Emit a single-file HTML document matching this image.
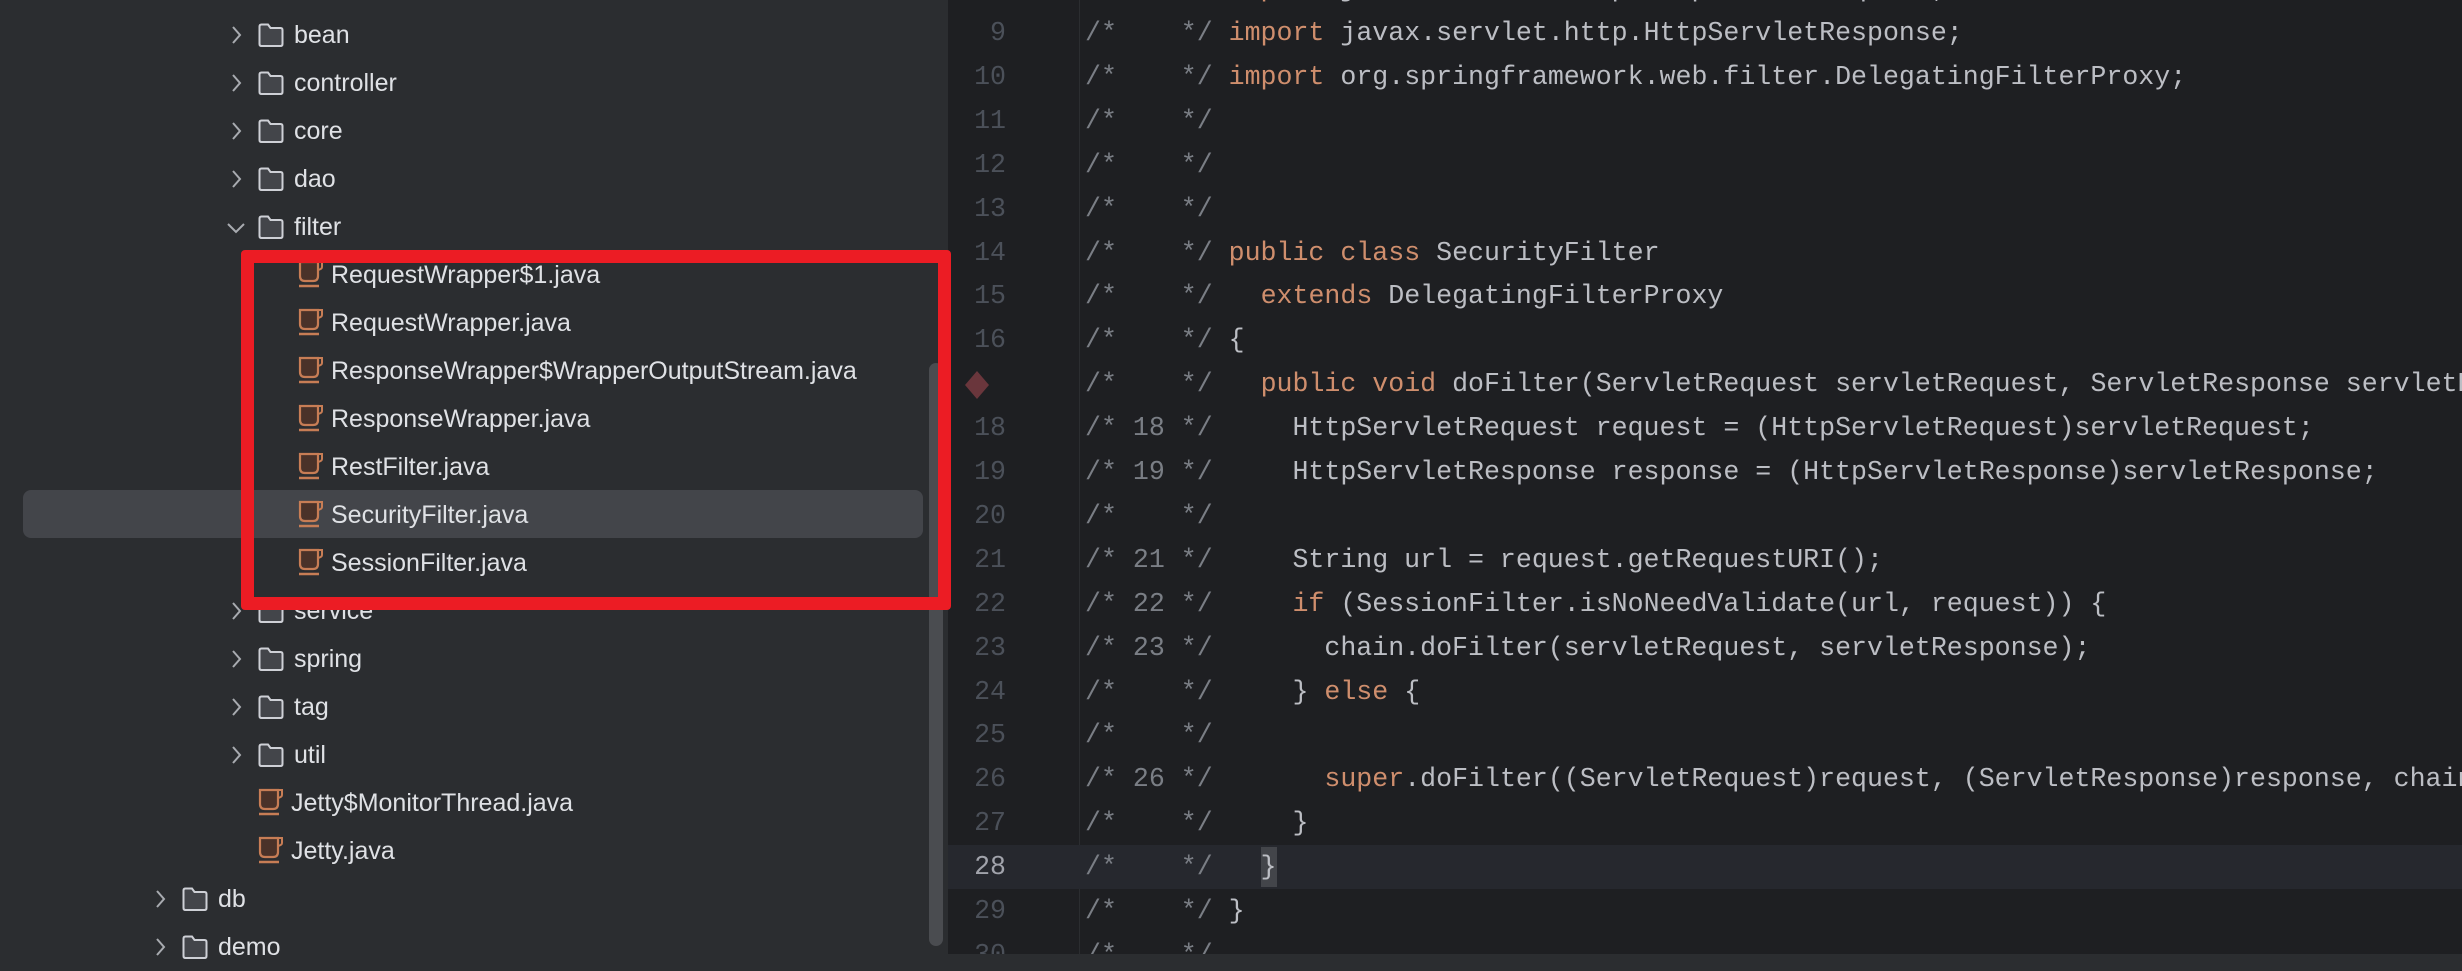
<!DOCTYPE html>
<html><head><meta charset="utf-8"><style>
*{margin:0;padding:0;box-sizing:border-box}
body{width:2462px;height:954px;overflow:hidden;background:#2b2d30;position:relative;font-family:"Liberation Sans",sans-serif}
.tree{position:absolute;left:0;top:0;width:948px;height:954px;background:#2b2d30}
.row{position:absolute;height:48px;line-height:48px;font-size:25px;color:#dfe1e5;white-space:nowrap}
.ed{position:absolute;left:948px;top:0;width:1514px;height:954px;background:#1e1f22;overflow:hidden}
.ln{position:absolute;height:44px;line-height:44px;font-family:"Liberation Mono",monospace;font-size:26.6px;white-space:pre}
.num{left:0;width:58px;text-align:right;color:#4b5059}
.code{left:137px;color:#bcbec4}
.c{color:#7a7e85}.k{color:#cf8e6d}
svg{position:absolute}
</style></head><body>
<div class="tree">
<div style="position:absolute;left:23px;top:490px;width:900px;height:48px;background:#43454a;border-radius:8px"></div>
<div style="position:absolute;left:929px;top:363px;width:14px;height:583px;background:#4a4c50;border-radius:7px"></div>
</div>
<div id="rows"></div>
<div class="ed">
<div style="position:absolute;left:131px;top:0;width:1px;height:954px;background:#2b2d30"></div>
<div style="position:absolute;left:0;top:845px;width:1514px;height:44px;background:#26282e"></div>
<div style="position:absolute;left:313px;top:847px;width:16px;height:40px;background:#43454a"></div>
<svg style="left:16px;top:370px" width="26" height="30" viewBox="0 0 26 30"><path d="M13 1 L25 15 L13 29 L1 15Z" fill="#6a363c"/></svg>
<div id="code"></div>
</div>
<div style="position:absolute;left:241px;top:250px;width:710px;height:360px;border:13px solid #ec1c24;border-radius:4px"></div>
<script>
var folder='<svg width="28" height="28" viewBox="0 0 28 28" style="position:absolute;top:10px;left:0"><path d="M2.5 5.5 Q2.5 3.5 4.5 3.5 H11 L13.5 7 H23.5 Q25.5 7 25.5 9 V23 Q25.5 25 23.5 25 H4.5 Q2.5 25 2.5 23Z" fill="#43454a" stroke="#ced0d6" stroke-width="2"/></svg>';
var java='<svg width="30" height="30" viewBox="0 0 30 30" style="position:absolute;top:8px;left:0"><path d="M3 3 H21 V17 Q21 22 16 22 H8 Q3 22 3 17Z" fill="#4a3229" stroke="#c77d55" stroke-width="2.2"/><path d="M21 3 H25 V8 Q25 10 21 11" fill="none" stroke="#c77d55" stroke-width="2"/><path d="M2 27 H22" stroke="#c77d55" stroke-width="2.4"/></svg>';
var chR='<svg width="16" height="24" viewBox="0 0 16 24" style="position:absolute;top:12px;left:0"><path d="M5 4 L12 12 L5 20" fill="none" stroke="#a8abb0" stroke-width="2"/></svg>';
var chD='<svg width="24" height="16" viewBox="0 0 24 16" style="position:absolute;top:17px;left:-4px"><path d="M4 4 L12 12 L20 4" fill="none" stroke="#a8abb0" stroke-width="2"/></svg>';
var items=[
['f',228,'bean'],['f',228,'controller'],['f',228,'core'],['f',228,'dao'],['o',228,'filter'],
['j',297,'RequestWrapper$1.java'],['j',297,'RequestWrapper.java'],['j',297,'ResponseWrapper$WrapperOutputStream.java'],['j',297,'ResponseWrapper.java'],['j',297,'RestFilter.java'],['j',297,'SecurityFilter.java'],['j',297,'SessionFilter.java'],
['f',228,'service'],['f',228,'spring'],['f',228,'tag'],['f',228,'util'],
['j',257,'Jetty$MonitorThread.java'],['j',257,'Jetty.java'],['f',152,'db'],['f',152,'demo']];
var h='';
items.forEach(function(it,i){var top=11+48*i,x=it[1];
if(it[0]=='j'){h+='<div class="row" style="left:'+x+'px;top:'+top+'px">'+java+'<span style="position:absolute;left:34px">'+it[2]+'</span></div>';}
else{h+='<div class="row" style="left:'+x+'px;top:'+top+'px">'+(it[0]=='o'?chD:chR)+'<div style="position:absolute;left:29px;top:0">'+folder+'</div><span style="position:absolute;left:66px">'+it[2]+'</span></div>';}
});
document.getElementById('rows').innerHTML=h;
var L=[
[8,' ','<span class="k">import</span> javax.servlet.http.HttpServletRequest;'],
[9,' ','<span class="k">import</span> javax.servlet.http.HttpServletResponse;'],
[10,' ','<span class="k">import</span> org.springframework.web.filter.DelegatingFilterProxy;'],
[11,' ',''],[12,' ',''],[13,' ',''],
[14,' ','<span class="k">public class</span> SecurityFilter'],
[15,' ','  <span class="k">extends</span> DelegatingFilterProxy'],
[16,' ','{'],
[17,' ','  <span class="k">public void</span> doFilter(ServletRequest servletRequest, ServletResponse servletResponse, FilterChain chain)'],
[18,'18','    HttpServletRequest request = (HttpServletRequest)servletRequest;'],
[19,'19','    HttpServletResponse response = (HttpServletResponse)servletResponse;'],
[20,' ',''],
[21,'21','    String url = request.getRequestURI();'],
[22,'22','    <span class="k">if</span> (SessionFilter.isNoNeedValidate(url, request)) {'],
[23,'23','      chain.doFilter(servletRequest, servletResponse);'],
[24,' ','    } <span class="k">else</span> {'],
[25,' ',''],
[26,'26','      <span class="k">super</span>.doFilter((ServletRequest)request, (ServletResponse)response, chain);'],
[27,' ','    }'],
[28,' ','  }'],
[29,' ','}'],
[30,' ','']];
var c='';
L.forEach(function(l){var top=11+43.9*(l[0]-9);
var nc=l[0]==28?'color:#a1a3ab':'';
c+='<div class="ln num" style="top:'+top+'px;'+nc+'">'+(l[0]==17?'':l[0])+'</div>';
var n=l[1]==' '?'  ':l[1];
c+='<div class="ln code" style="top:'+top+'px"><span class="c">/* '+n+' */</span>'+(l[2]?' '+l[2]:'')+'</div>';
});
document.getElementById('code').innerHTML=c;
</script>
</body></html>
